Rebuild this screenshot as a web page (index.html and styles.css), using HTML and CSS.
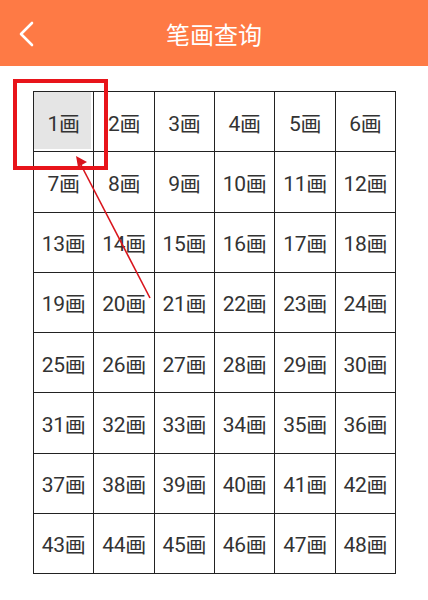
FILE: index.html
```html
<!DOCTYPE html>
<html lang="zh">
<head>
<meta charset="utf-8">
<title>笔画查询</title>
<link rel="stylesheet" href="styles.css">
</head>
<body>
<header class="header">
  <svg class="back" width="16" height="26" viewBox="0 0 16 26"><path d="M14 2 L3 13 L14 24" fill="none" stroke="#fff" stroke-width="2.6" stroke-linecap="round" stroke-linejoin="round"/></svg>
  <h1 class="title">笔画查询</h1>
</header>
<main class="content">
  <div class="grid">
    <div class="cell active">1画</div><div class="cell">2画</div><div class="cell">3画</div><div class="cell">4画</div><div class="cell">5画</div><div class="cell">6画</div>
    <div class="cell">7画</div><div class="cell">8画</div><div class="cell">9画</div><div class="cell">10画</div><div class="cell">11画</div><div class="cell">12画</div>
    <div class="cell">13画</div><div class="cell">14画</div><div class="cell">15画</div><div class="cell">16画</div><div class="cell">17画</div><div class="cell">18画</div>
    <div class="cell">19画</div><div class="cell">20画</div><div class="cell">21画</div><div class="cell">22画</div><div class="cell">23画</div><div class="cell">24画</div>
    <div class="cell">25画</div><div class="cell">26画</div><div class="cell">27画</div><div class="cell">28画</div><div class="cell">29画</div><div class="cell">30画</div>
    <div class="cell">31画</div><div class="cell">32画</div><div class="cell">33画</div><div class="cell">34画</div><div class="cell">35画</div><div class="cell">36画</div>
    <div class="cell">37画</div><div class="cell">38画</div><div class="cell">39画</div><div class="cell">40画</div><div class="cell">41画</div><div class="cell">42画</div>
    <div class="cell">43画</div><div class="cell">44画</div><div class="cell">45画</div><div class="cell">46画</div><div class="cell">47画</div><div class="cell">48画</div>
  </div>
</main>
<div class="highlight"></div>
<svg class="arrow" width="428" height="600" viewBox="0 0 428 600">
  <line x1="150" y1="298" x2="80" y2="163" stroke="#d8141c" stroke-width="1.6"/>
  <polygon points="76,156 87,162 78,167" fill="#d8141c"/>
</svg>
</body>
</html>
```
FILE: styles.css
```css
* { box-sizing: border-box; }
html, body { margin: 0; padding: 0; background: #fff; }
body {
  width: 428px;
  height: 600px;
  position: relative;
  overflow: hidden;
  font-family: Roboto, "Noto Sans CJK SC", sans-serif;
}
.header {
  height: 66px;
  background: #fe7a45;
  display: flex;
  align-items: center;
  justify-content: center;
  position: relative;
}
.back {
  position: absolute;
  left: 18px;
  top: 21px;
}
.title {
  margin: 0;
  font-size: 24px;
  font-weight: 400;
  color: #fff;
  font-family: "Noto Sans CJK SC", sans-serif;
  letter-spacing: 0;
}
.content {
  padding: 25px 0 0 33px;
}
.grid {
  width: 363px;
  display: grid;
  grid-template-columns: repeat(6, 1fr);
  grid-auto-rows: 60.25px;
  border-left: 1.2px solid #222;
  border-top: 1.2px solid #222;
}
.cell {
  border-right: 1.2px solid #222;
  border-bottom: 1.2px solid #222;
  display: flex;
  align-items: center;
  justify-content: center;
  font-size: 21px;
  color: #333;
  white-space: nowrap;
  letter-spacing: -0.3px;
}
.cell.active {
  background: #e5e5e5;
  box-shadow: inset -2px -2px 0 #fff;
}
.highlight {
  position: absolute;
  left: 13px;
  top: 79px;
  width: 95px;
  height: 91px;
  border: 4px solid #e8141a;
}
.arrow {
  position: absolute;
  left: 0;
  top: 0;
  pointer-events: none;
}
```
